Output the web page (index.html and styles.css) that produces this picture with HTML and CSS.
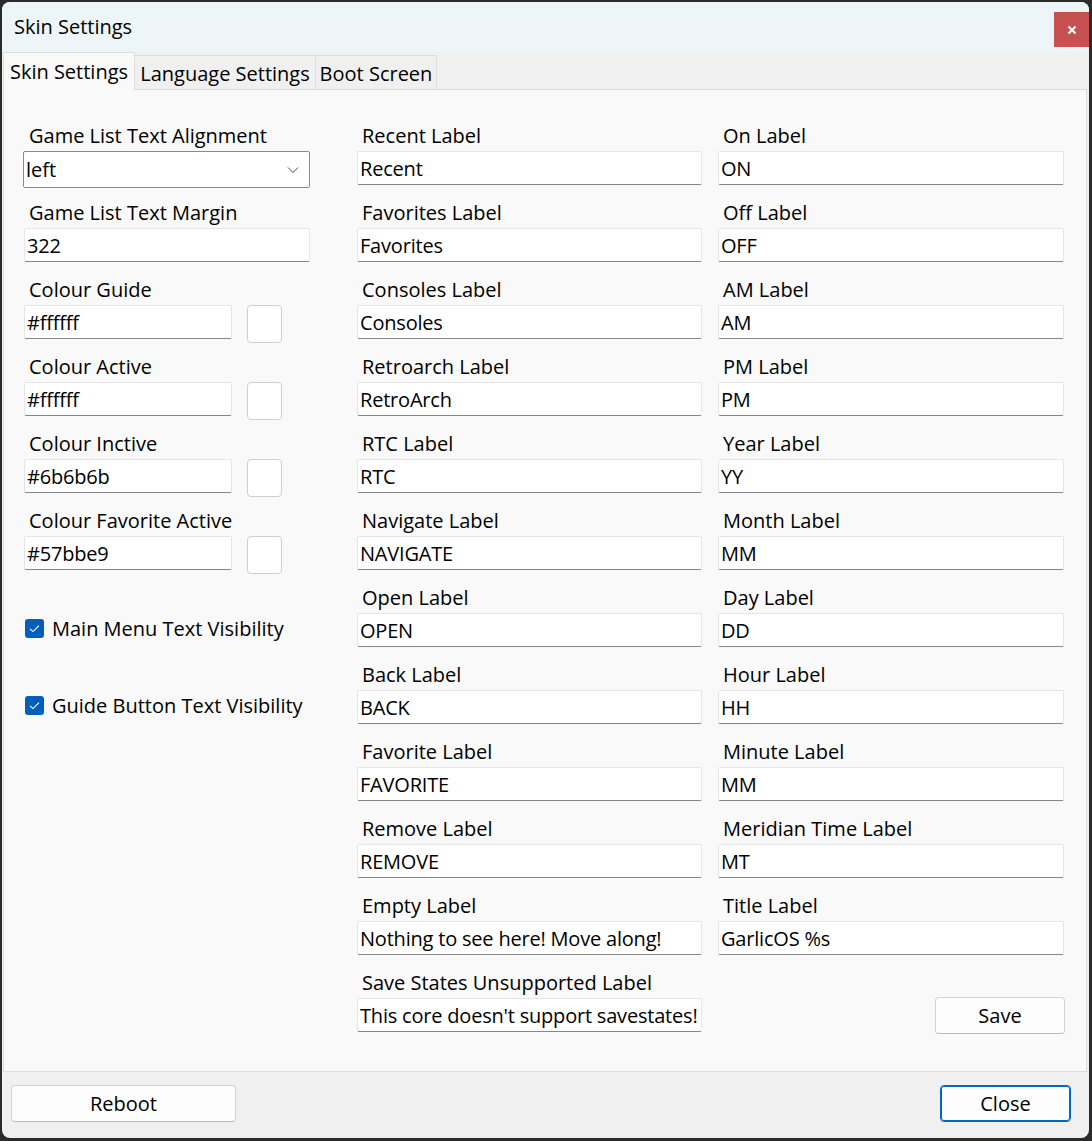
FILE: index.html
```html
<!DOCTYPE html>
<html>
<head>
<meta charset="utf-8">
<link rel="stylesheet" href="styles.css">
</head>
<body>
<div class="window">
  <div class="titlebar">
    <span class="title">Skin Settings</span>
    <div class="close-x">
      <svg width="10" height="10" viewBox="0 0 10 10"><path d="M1.5 1.5 L8.5 8.5 M8.5 1.5 L1.5 8.5" stroke="#fff" stroke-width="2.2" fill="none"/></svg>
    </div>
  </div>
  <div class="tabs">
    <div class="tab active">Skin Settings</div>
    <div class="tab tab-lang">Language Settings</div>
    <div class="tab tab-boot">Boot Screen</div>
  </div>
  <div class="panel">
    <div class="col col1">
      <div class="field field-combo">
        <div class="label">Game List Text Alignment</div>
        <div class="combo">
          <span>left</span>
          <svg width="12" height="8" viewBox="0 0 12 8"><path d="M1 1.5 L6 6.5 L11 1.5" stroke="#444" stroke-width="1" fill="none"/></svg>
        </div>
      </div>
      <div class="field">
        <div class="label">Game List Text Margin</div>
        <div class="input">322</div>
      </div>
      <div class="field colour">
        <div class="label">Colour Guide</div>
        <div class="colour-row"><div class="input">#ffffff</div><div class="swatch"></div></div>
      </div>
      <div class="field colour">
        <div class="label">Colour Active</div>
        <div class="colour-row"><div class="input">#ffffff</div><div class="swatch"></div></div>
      </div>
      <div class="field colour">
        <div class="label">Colour Inctive</div>
        <div class="colour-row"><div class="input">#6b6b6b</div><div class="swatch"></div></div>
      </div>
      <div class="field colour">
        <div class="label">Colour Favorite Active</div>
        <div class="colour-row"><div class="input">#57bbe9</div><div class="swatch"></div></div>
      </div>
      <div class="check-row first">
        <span class="checkbox"><svg width="19" height="19" viewBox="0 0 19 19"><path d="M5 9.8 L8 12.6 L14 6.6" stroke="#fff" stroke-width="1.1" fill="none"/></svg></span>
        <span>Main Menu Text Visibility</span>
      </div>
      <div class="check-row">
        <span class="checkbox"><svg width="19" height="19" viewBox="0 0 19 19"><path d="M5 9.8 L8 12.6 L14 6.6" stroke="#fff" stroke-width="1.1" fill="none"/></svg></span>
        <span>Guide Button Text Visibility</span>
      </div>
    </div>
    <div class="col col2">
      <div class="field"><div class="label">Recent Label</div><div class="input">Recent</div></div>
      <div class="field"><div class="label">Favorites Label</div><div class="input">Favorites</div></div>
      <div class="field"><div class="label">Consoles Label</div><div class="input">Consoles</div></div>
      <div class="field"><div class="label">Retroarch Label</div><div class="input">RetroArch</div></div>
      <div class="field"><div class="label">RTC Label</div><div class="input">RTC</div></div>
      <div class="field"><div class="label">Navigate Label</div><div class="input">NAVIGATE</div></div>
      <div class="field"><div class="label">Open Label</div><div class="input">OPEN</div></div>
      <div class="field"><div class="label">Back Label</div><div class="input">BACK</div></div>
      <div class="field"><div class="label">Favorite Label</div><div class="input">FAVORITE</div></div>
      <div class="field"><div class="label">Remove Label</div><div class="input">REMOVE</div></div>
      <div class="field"><div class="label">Empty Label</div><div class="input">Nothing to see here! Move along!</div></div>
      <div class="field"><div class="label">Save States Unsupported Label</div><div class="input">This core doesn't support savestates!</div></div>
    </div>
    <div class="col col3">
      <div class="field"><div class="label">On Label</div><div class="input">ON</div></div>
      <div class="field"><div class="label">Off Label</div><div class="input">OFF</div></div>
      <div class="field"><div class="label">AM Label</div><div class="input">AM</div></div>
      <div class="field"><div class="label">PM Label</div><div class="input">PM</div></div>
      <div class="field"><div class="label">Year Label</div><div class="input">YY</div></div>
      <div class="field"><div class="label">Month Label</div><div class="input">MM</div></div>
      <div class="field"><div class="label">Day Label</div><div class="input">DD</div></div>
      <div class="field"><div class="label">Hour Label</div><div class="input">HH</div></div>
      <div class="field"><div class="label">Minute Label</div><div class="input">MM</div></div>
      <div class="field"><div class="label">Meridian Time Label</div><div class="input">MT</div></div>
      <div class="field"><div class="label">Title Label</div><div class="input">GarlicOS %s</div></div>
      <div class="save-wrap"><button class="btn save">Save</button></div>
    </div>
  </div>
  <div class="bottombar">
    <button class="btn reboot">Reboot</button>
    <button class="btn close-btn">Close</button>
  </div>
</div>
</body>
</html>
```
FILE: styles.css
```css
* { box-sizing: border-box; }
html, body { margin: 0; padding: 0; }
body {
  background: #2a2a2a;
  font-family: "Open Sans", "Noto Sans", sans-serif;
  font-size: 20px;
  color: #000;
  width: 1092px;
  height: 1141px;
  overflow: hidden;
}
.window {
  margin: 2px 0 0 2px;
  width: 1087px;
  height: 1136px;
  background: #f0f0f0;
  border-radius: 8px;
  overflow: hidden;
  display: flex;
  flex-direction: column;
}
.titlebar {
  height: 50px;
  flex: none;
  background: #edf5f9;
  display: flex;
  justify-content: space-between;
  align-items: center;
  padding-left: 12px;
}
.title { line-height: 50px; }
.close-x {
  align-self: flex-start;
  margin-top: 10px;
  width: 35px;
  height: 35px;
  background: #c75050;
  display: flex;
  align-items: center;
  justify-content: center;
}
.tabs {
  height: 37px;
  flex: none;
  display: flex;
  align-items: flex-end;
  padding-left: 1px;
  position: relative;
  z-index: 1;
}
.tab {
  height: 34px;
  background: #f0f0f0;
  border: 1px solid #dcdcdc;
  border-bottom: none;
  border-left: none;
  line-height: 36px;
  white-space: nowrap;
  text-align: center;
  overflow: hidden;
}
.tab-lang { width: 181px; }
.tab-boot { width: 121px; }
.tab.active {
  height: 38px;
  margin-bottom: -1px;
  width: 132px;
  background: #f9f9f9;
  border-left: 1px solid #dcdcdc;
  line-height: 38px;
}
.panel {
  flex: none;
  height: 983px;
  margin: 0 2px 0 1px;
  background: #f9f9f9;
  border: 1px solid #dcdcdc;
  padding: 35px 0 0 20px;
  display: flex;
  align-items: flex-start;
}
.col1 { width: 286px; margin-right: 47px; }
.col2 { width: 345px; margin-right: 16px; }
.col3 { width: 346px; }
.field { margin-bottom: 17px; }
.label {
  line-height: 22px;
  height: 22px;
  margin-bottom: 4px;
  padding-left: 5px;
  white-space: nowrap;
}
.input {
  height: 34px;
  background: #fff;
  border: 1px solid #e5e5e5;
  border-bottom: 1px solid #868686;
  border-radius: 2px;
  padding: 1px 1px 0 2px;
  line-height: 32px;
  letter-spacing: -0.2px;
  white-space: nowrap;
  overflow: hidden;
}
.field-combo { margin-bottom: 14px; }
.combo {
  height: 37px;
  background: #fff;
  border: 1px solid #8a8a8a;
  border-radius: 2px;
  display: flex;
  align-items: center;
  justify-content: space-between;
  padding: 0 10px 0 2px;
  margin-left: -1px;
}
.colour { margin-bottom: 13px; }
.colour-row {
  display: flex;
  align-items: flex-start;
  gap: 15px;
}
.colour-row .input { width: 208px; }
.swatch {
  width: 35px;
  height: 38px;
  background: #fff;
  border: 1px solid #cfcfcf;
  border-radius: 4px;
}
.check-row {
  height: 26px;
  display: flex;
  align-items: center;
  gap: 8px;
  margin-bottom: 51px;
  white-space: nowrap;
}
.check-row.first { margin-top: 41px; }
.checkbox {
  width: 19px;
  height: 19px;
  border-radius: 3px;
  background: #005fb8;
  display: block;
  margin-left: 1px;
}
.checkbox svg { display: block; }
.save-wrap {
  display: flex;
  justify-content: flex-end;
  padding-top: 25px;
  margin-right: -1px;
}
.btn {
  font-family: inherit;
  font-size: 20px;
  color: #000;
  background: #fdfdfd;
  border: 1px solid #d3d3d3;
  border-bottom-color: #bcbcbc;
  border-radius: 4px;
  height: 37px;
  padding: 0;
}
.save { width: 130px; }
.bottombar {
  flex: 1;
  display: flex;
  justify-content: space-between;
  align-items: center;
  padding: 0 18px 3px 9px;
}
.reboot { width: 225px; }
.close-btn {
  width: 131px;
  border: 1px solid #0067c0;
  outline: 1px solid #0067c0;
  outline-offset: -2px;
  background: #fdfdfd;
}
```
